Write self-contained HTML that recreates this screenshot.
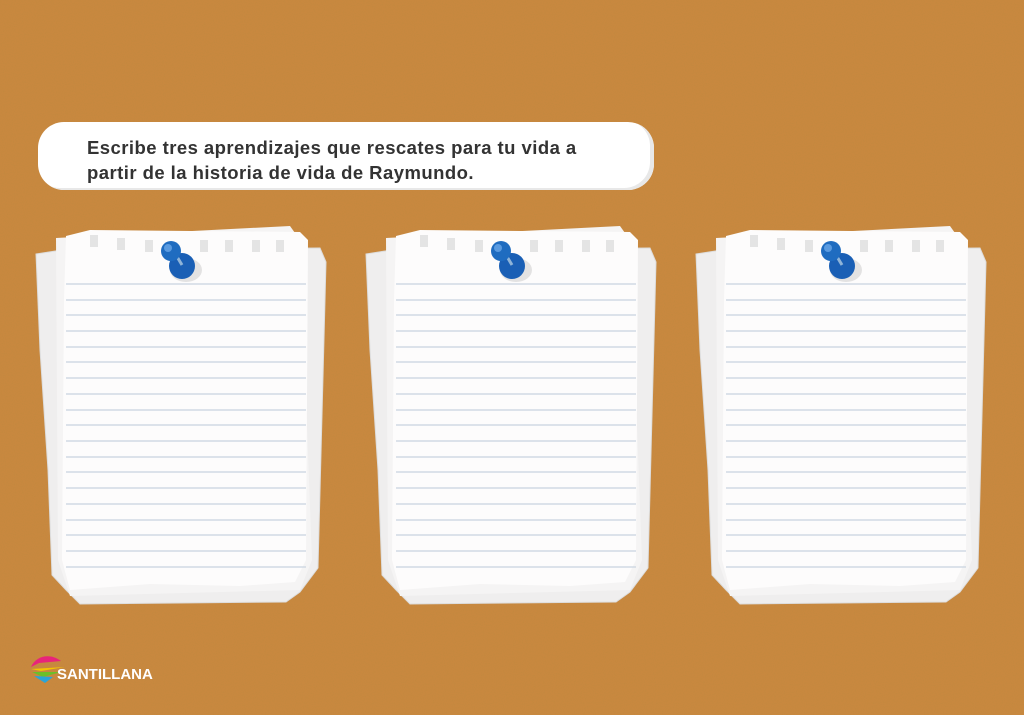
<!DOCTYPE html><html><head><meta charset="utf-8"><style>
body{margin:0;width:1024px;height:715px;overflow:hidden;background:#c8883f;position:relative;font-family:"Liberation Sans",sans-serif}
.box{position:absolute;left:38px;top:122px;width:616px;height:68px;background:#fff;border-radius:26px;box-shadow:-4px -2px 0 #e8e8e8 inset}
.box p{margin:0;position:absolute;left:49px;top:13px;font-size:18.5px;font-weight:bold;color:#333;line-height:25px;letter-spacing:.45px}
.logo{position:absolute;left:57px;top:666px;color:#fff;font-weight:bold;font-size:15px}
</style></head><body>
<svg width="1024" height="715" style="position:absolute;left:0;top:0">
<filter id="n"><feTurbulence type="fractalNoise" baseFrequency=".9" numOctaves="2" seed="3"/><feColorMatrix values="0 0 0 0 .45  0 0 0 0 .25  0 0 0 0 .05  0 0 0 1.2 -.55"/></filter>
<rect width="1024" height="715" filter="url(#n)" opacity=".55"/>
</svg>
<div class="box"><p>Escribe tres aprendizajes que rescates para tu vida a<br>partir de la historia de vida de Raymundo.</p></div>
<svg width="1024" height="715" style="position:absolute;left:0;top:0">
<defs>
<g id="pad">
<polygon points="36,254 62,250 320,248 326,262 318,568 300,592 286,602 80,604 66,590 52,575 48,470 40,350" fill="#efeeee" stroke="#ddd"/>
<polygon points="56,238 290,226 300,240 312,560 300,590 70,596 58,560" fill="#f5f4f4"/>
<polygon points="66,236 90,230 300,232 308,240 306,560 295,582 240,586 150,584 70,590 62,560 64,300" fill="#fdfcfc"/>
<g stroke="#c9d3df" stroke-width="1.2">
<line x1="66" y1="284" x2="306" y2="284"/><line x1="66" y1="300" x2="306" y2="300"/><line x1="66" y1="315" x2="306" y2="315"/><line x1="66" y1="331" x2="306" y2="331"/><line x1="66" y1="347" x2="306" y2="347"/><line x1="66" y1="362" x2="306" y2="362"/><line x1="66" y1="378" x2="306" y2="378"/><line x1="66" y1="394" x2="306" y2="394"/><line x1="66" y1="410" x2="306" y2="410"/><line x1="66" y1="425" x2="306" y2="425"/><line x1="66" y1="441" x2="306" y2="441"/><line x1="66" y1="457" x2="306" y2="457"/><line x1="66" y1="472" x2="306" y2="472"/><line x1="66" y1="488" x2="306" y2="488"/><line x1="66" y1="504" x2="306" y2="504"/><line x1="66" y1="520" x2="306" y2="520"/><line x1="66" y1="535" x2="306" y2="535"/><line x1="66" y1="551" x2="306" y2="551"/><line x1="66" y1="567" x2="306" y2="567"/>
</g>
<g fill="#e4e4e4"><rect x="90" y="235" width="8" height="12"/><rect x="117" y="238" width="8" height="12"/><rect x="145" y="240" width="8" height="12"/><rect x="200" y="240" width="8" height="12"/><rect x="225" y="240" width="8" height="12"/><rect x="252" y="240" width="8" height="12"/><rect x="276" y="240" width="8" height="12"/></g>
<ellipse cx="186" cy="270" rx="16" ry="12" fill="#000" opacity=".1"/>
<circle cx="182" cy="266" r="13" fill="#1a5fb5"/>
<line x1="176" y1="255" x2="182" y2="265" stroke="#8fb4d8" stroke-width="3"/>
<circle cx="171" cy="251" r="10" fill="#1f6cc0"/>
<circle cx="168" cy="248" r="4" fill="#5b9be0"/>
</g></defs>
<use href="#pad"/><use href="#pad" x="330"/><use href="#pad" x="660"/>
<g transform="translate(31,655)">
<path d="M0,12 C5,0 20,-2 30,6 L8,8Z" fill="#e8247a"/>
<path d="M0,14 L34,12 L10,16Z" fill="#f5c400"/>
<path d="M1,17 L30,17 L12,22Z" fill="#6cbf2a"/>
<path d="M3,21 L22,22 L14,28 Z" fill="#2aa4d8"/>
</g></svg>
<div class="logo">SANTILLANA</div>
</body></html>
